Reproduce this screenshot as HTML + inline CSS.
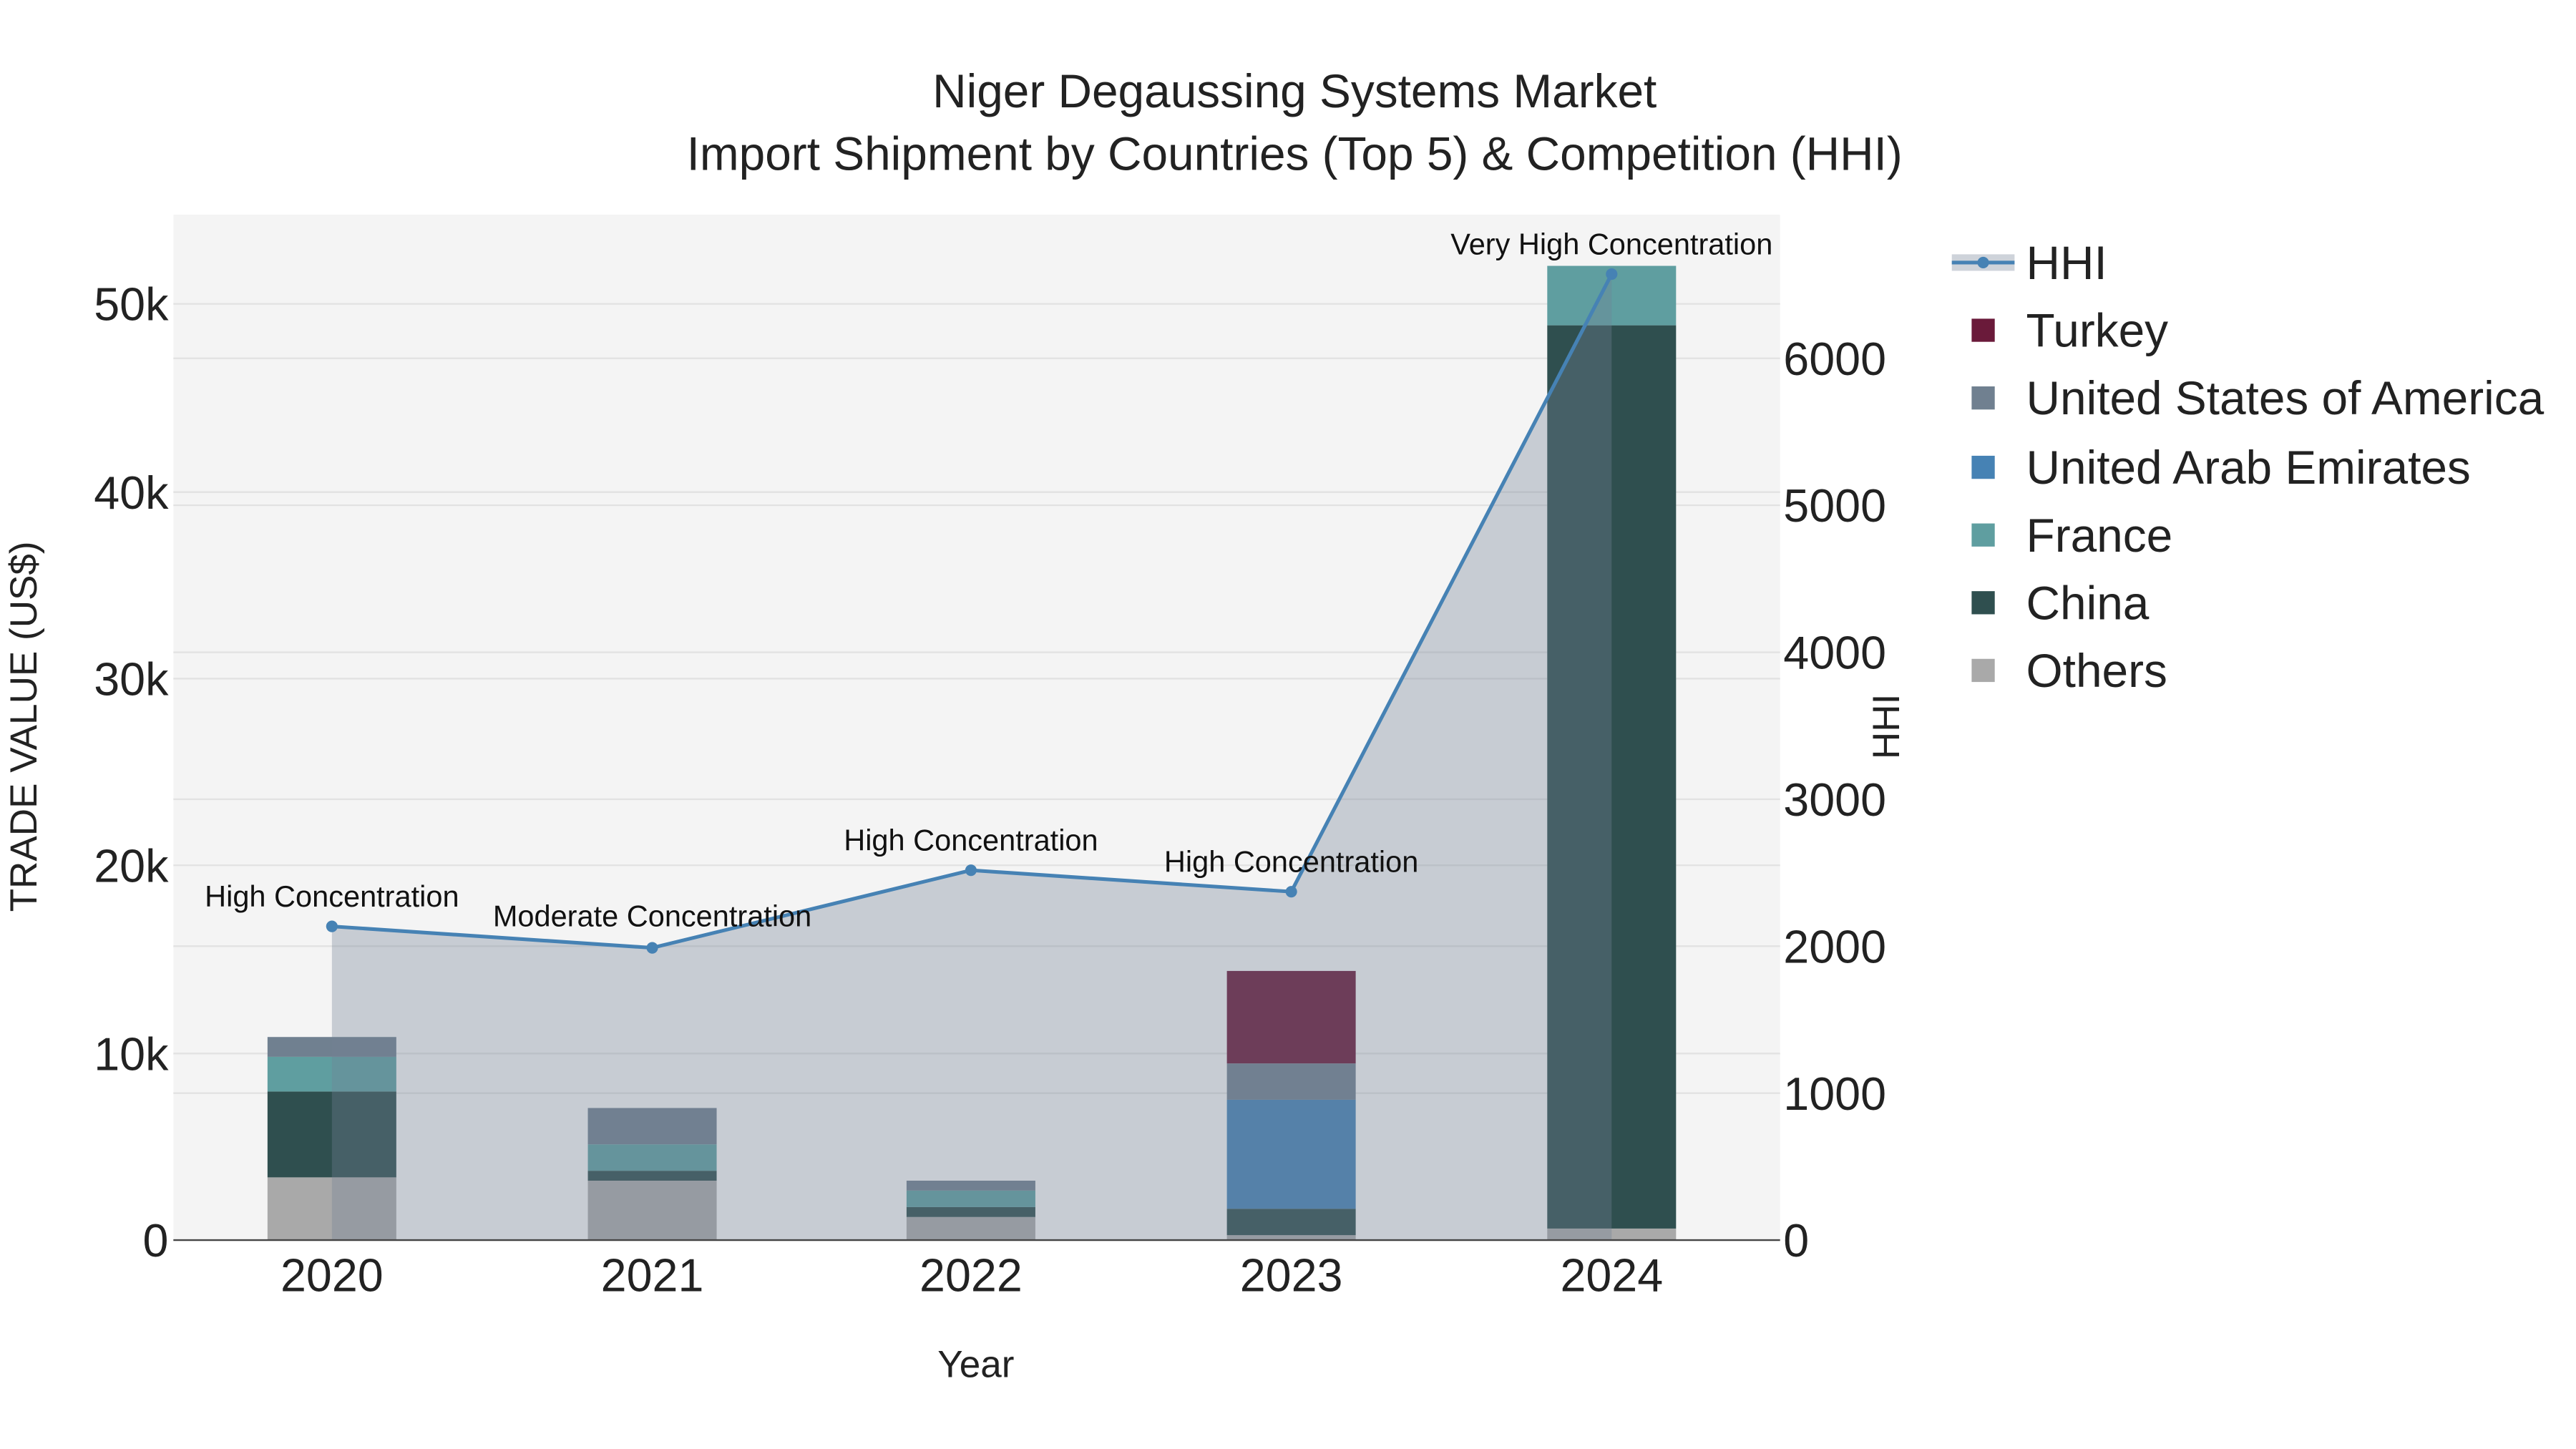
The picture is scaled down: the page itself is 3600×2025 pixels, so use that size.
<!DOCTYPE html>
<html><head><meta charset="utf-8"><style>html,body{margin:0;padding:0;background:#fff}svg{display:block}</style></head><body>
<svg width="3600" height="2025" viewBox="0 0 1560 877.5" xmlns="http://www.w3.org/2000/svg" font-family="Liberation Sans, Arial, sans-serif">
<rect width="1560" height="877.5" fill="#fff"/>
<rect x="105" y="130" width="973" height="621" fill="#f4f4f4"/>
<g stroke="#e2e2e2" stroke-width="1">
<line x1="105" x2="1078" y1="638" y2="638"/><line x1="105" x2="1078" y1="524" y2="524"/><line x1="105" x2="1078" y1="411" y2="411"/><line x1="105" x2="1078" y1="298" y2="298"/><line x1="105" x2="1078" y1="184" y2="184"/>
<line x1="105" x2="1078" y1="662" y2="662"/><line x1="105" x2="1078" y1="573" y2="573"/><line x1="105" x2="1078" y1="484" y2="484"/><line x1="105" x2="1078" y1="395" y2="395"/><line x1="105" x2="1078" y1="306" y2="306"/><line x1="105" x2="1078" y1="217" y2="217"/>
</g>
<g>
<rect x="162" y="713" width="78" height="38" fill="#a9a9a9"/>
<rect x="162" y="661" width="78" height="52" fill="#2f4f4f"/>
<rect x="162" y="640" width="78" height="21" fill="#5f9ea0"/>
<rect x="162" y="628" width="78" height="12" fill="#708090"/>
<rect x="356" y="715" width="78" height="36" fill="#a9a9a9"/>
<rect x="356" y="709" width="78" height="6" fill="#2f4f4f"/>
<rect x="356" y="693" width="78" height="16" fill="#5f9ea0"/>
<rect x="356" y="671" width="78" height="22" fill="#708090"/>
<rect x="549" y="737" width="78" height="14" fill="#a9a9a9"/>
<rect x="549" y="731" width="78" height="6" fill="#2f4f4f"/>
<rect x="549" y="721" width="78" height="10" fill="#5f9ea0"/>
<rect x="549" y="715" width="78" height="6" fill="#708090"/>
<rect x="743" y="748" width="78" height="3" fill="#a9a9a9"/>
<rect x="743" y="732" width="78" height="16" fill="#2f4f4f"/>
<rect x="743" y="666" width="78" height="66" fill="#4682b4"/>
<rect x="743" y="644" width="78" height="22" fill="#708090"/>
<rect x="743" y="588" width="78" height="56" fill="#6a1a3a"/>
<rect x="937" y="744" width="78" height="7" fill="#a9a9a9"/>
<rect x="937" y="197" width="78" height="547" fill="#2f4f4f"/>
<rect x="937" y="161" width="78" height="36" fill="#5f9ea0"/>
</g>
<polygon points="201,751 201,561 395,574 588,527 782,540 976,166 976,751" fill="rgba(116,128,150,0.35)"/>
<polyline points="201,561 395,574 588,527 782,540 976,166" fill="none" stroke="#4682b4" stroke-width="2.2"/>
<g fill="#4682b4"><circle cx="201" cy="561" r="3.5"/><circle cx="395" cy="574" r="3.5"/><circle cx="588" cy="527" r="3.5"/><circle cx="782" cy="540" r="3.5"/><circle cx="976" cy="166" r="3.5"/></g>
<line x1="105" x2="1078" y1="751" y2="751" stroke="#444" stroke-width="1"/>
<g font-size="18" fill="#111" text-anchor="middle">
<text x="201" y="549">High Concentration</text>
<text x="395" y="561">Moderate Concentration</text>
<text x="588" y="515">High Concentration</text>
<text x="782" y="528">High Concentration</text>
<text x="976" y="154">Very High Concentration</text>
</g>
<g font-size="28.5" fill="#222" text-anchor="middle">
<text x="784" y="65">Niger Degaussing Systems Market</text>
<text x="784" y="103">Import Shipment by Countries (Top 5) &amp; Competition (HHI)</text>
</g>
<g font-size="28" fill="#222" text-anchor="end">
<text x="102" y="761">0</text><text x="102" y="648">10k</text><text x="102" y="534">20k</text><text x="102" y="421">30k</text><text x="102" y="308">40k</text><text x="102" y="194">50k</text>
</g>
<g font-size="28" fill="#222">
<text x="1080" y="761">0</text><text x="1080" y="672">1000</text><text x="1080" y="583">2000</text><text x="1080" y="494">3000</text><text x="1080" y="405">4000</text><text x="1080" y="316">5000</text><text x="1080" y="227">6000</text>
</g>
<g font-size="28" fill="#222" text-anchor="middle">
<text x="201" y="782">2020</text><text x="395" y="782">2021</text><text x="588" y="782">2022</text><text x="782" y="782">2023</text><text x="976" y="782">2024</text>
</g>
<text x="591" y="834" font-size="23" fill="#222" text-anchor="middle">Year</text>
<text transform="translate(22,440) rotate(-90)" font-size="23" fill="#222" text-anchor="middle">TRADE VALUE (US$)</text>
<text transform="translate(1150,440) rotate(-90)" font-size="23" fill="#222" text-anchor="middle">HHI</text>
<rect x="1182" y="154" width="38" height="10" fill="rgba(116,128,150,0.35)"/>
<line x1="1182" x2="1220" y1="159" y2="159" stroke="#4682b4" stroke-width="2.2"/>
<circle cx="1201" cy="159" r="3.5" fill="#4682b4"/>
<rect x="1194" y="193" width="14" height="14" fill="#6a1a3a"/>
<rect x="1194" y="234" width="14" height="14" fill="#708090"/>
<rect x="1194" y="276" width="14" height="14" fill="#4682b4"/>
<rect x="1194" y="317" width="14" height="14" fill="#5f9ea0"/>
<rect x="1194" y="358" width="14" height="14" fill="#2f4f4f"/>
<rect x="1194" y="399" width="14" height="14" fill="#a9a9a9"/>
<g font-size="28.5" fill="#222">
<text x="1227" y="169">HHI</text>
<text x="1227" y="210">Turkey</text>
<text x="1227" y="251">United States of America</text>
<text x="1227" y="293">United Arab Emirates</text>
<text x="1227" y="334">France</text>
<text x="1227" y="375">China</text>
<text x="1227" y="416">Others</text>
</g>
</svg>
</body></html>
